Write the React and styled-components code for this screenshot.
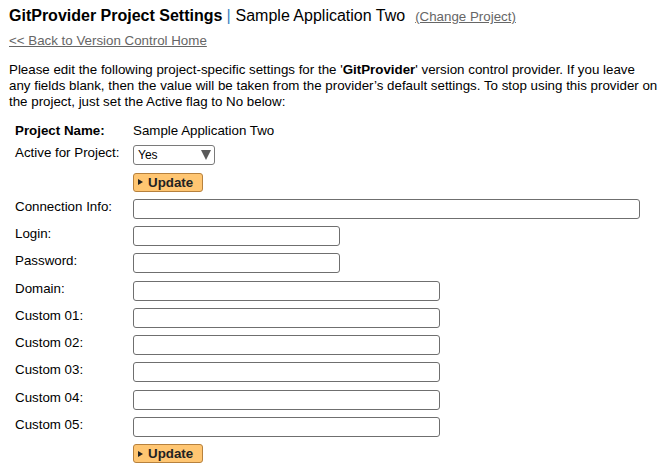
import React from "react";
import styled, { createGlobalStyle } from "styled-components";

const GlobalStyle = createGlobalStyle`
  body {
    margin: 0;
    background: #ffffff;
    font-family: "Liberation Sans", Arial, sans-serif;
    color: #000000;
  }
`;

const Page = styled.div`
  padding: 6px 8px 0 9px;
  width: 667px;
  box-sizing: border-box;
`;

const TitleBar = styled.div`
  display: flex;
  align-items: baseline;
  font-size: 16px;
  line-height: 20px;
`;

const TitleStrong = styled.span`
  font-weight: bold;
`;

const Divider = styled.span`
  color: #3a7fc1;
  margin: 0 5px 0 4px;
`;

const SmallLink = styled.a`
  color: #666666;
  font-size: 13.33px;
  text-decoration: underline;
  margin-left: ${props => props.gap || 0}px;
`;

const BackRow = styled.div`
  margin-top: 5px;
  line-height: 16px;
`;

const Intro = styled.p`
  margin: 13px 0 0 0;
  font-size: 13.33px;
  line-height: 16px;
`;

const Form = styled.div`
  display: grid;
  grid-template-columns: 118px auto;
  align-items: center;
  row-gap: 7.25px;
  margin: 13px 0 0 6px;
  font-size: 13.33px;
`;

const Label = styled.div`
  font-weight: ${props => (props.bold ? "bold" : "normal")};
  line-height: 16px;
  align-self: start;
  margin-bottom: ${props => (props.bold ? -1 : 0)}px;
`;

const Value = styled.div`
  line-height: 16px;
  margin-bottom: -1px;
`;

const Select = styled.div`
  width: 82px;
  height: 20px;
  box-sizing: border-box;
  border: 1px solid #7a7a7a;
  border-radius: 3px;
  display: flex;
  align-items: center;
  justify-content: space-between;
  padding: 0 3px 0 4px;
  font-size: 12px;
`;

const Arrow = styled.span`
  width: 0;
  height: 0;
  border-left: 5px solid transparent;
  border-right: 5px solid transparent;
  border-top: 10px solid #5a5a5a;
`;

const Button = styled.button`
  display: flex;
  align-items: center;
  gap: 5px;
  height: 19px;
  padding: 0 6px 0 4px;
  background: #ffc672;
  border: 1px solid #b7813d;
  border-radius: 3px;
  font-family: "Liberation Sans", Arial, sans-serif;
  font-weight: bold;
  font-size: 13.33px;
  color: #222222;
  cursor: pointer;
  width: 70px;
`;

const Tri = styled.span`
  width: 0;
  height: 0;
  border-top: 3px solid transparent;
  border-bottom: 3px solid transparent;
  border-left: 5px solid #222222;
`;

const Input = styled.input`
  width: ${props => props.w}px;
  height: 20px;
  box-sizing: border-box;
  border: 1px solid #6f6f6f;
  border-radius: 3px;
  padding: 0 4px;
  display: block;
`;

const fields = [
  { label: "Connection Info:", w: 507 },
  { label: "Login:", w: 207 },
  { label: "Password:", w: 207 },
  { label: "Domain:", w: 307 },
  { label: "Custom 01:", w: 307 },
  { label: "Custom 02:", w: 307 },
  { label: "Custom 03:", w: 307 },
  { label: "Custom 04:", w: 307 },
  { label: "Custom 05:", w: 307 }
];

function UpdateButton() {
  return (
    <Button>
      <Tri />
      Update
    </Button>
  );
}

export default function App() {
  return (
    <Page>
      <GlobalStyle />
      <TitleBar>
        <TitleStrong>GitProvider Project Settings</TitleStrong>
        <Divider>|</Divider>
        <span>Sample Application Two</span>
        <SmallLink gap={10}>(Change Project)</SmallLink>
      </TitleBar>
      <BackRow>
        <SmallLink>&lt;&lt; Back to Version Control Home</SmallLink>
      </BackRow>
      <Intro>
        Please edit the following project-specific settings for the '
        <b>GitProvider</b>' version control provider. If you leave any fields
        blank, then the value will be taken from the provider’s default
        settings. To stop using this provider on the project, just set the
        Active flag to No below:
      </Intro>
      <Form>
        <Label bold>Project Name:</Label>
        <Value>Sample Application Two</Value>
        <Label>Active for Project:</Label>
        <Select>
          Yes
          <Arrow />
        </Select>
        <div />
        <UpdateButton />
        {fields.map(field => (
          <React.Fragment key={field.label}>
            <Label>{field.label}</Label>
            <Input w={field.w} />
          </React.Fragment>
        ))}
        <div />
        <UpdateButton />
      </Form>
    </Page>
  );
}
